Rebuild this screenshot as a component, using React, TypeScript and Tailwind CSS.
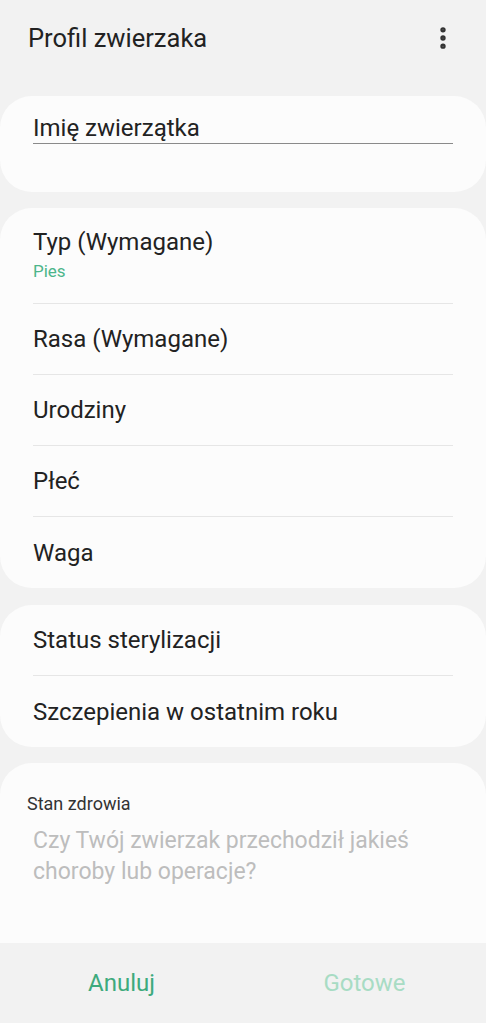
import { EllipsisVertical } from "lucide-react";

const font = { fontFamily: "Roboto, 'Noto Sans', sans-serif" };

function Row({ label, value, last }: { label: string; value?: string; last?: boolean }) {
	return (
		<div className="px-[33px]">
			<div
				className={
					"flex flex-col justify-center " +
					(value ? "h-[96px] " : "h-[71px] ") +
					(last ? "" : "border-b border-[#e6e6e6]")
				}
			>
				<span className="text-[24px] leading-[28px] text-[#222]">{label}</span>
				{value && <span className="mt-[3px] text-[17px] leading-[24px] text-[#4cb58a]">{value}</span>}
			</div>
		</div>
	);
}

export default function App() {
	return (
		<div className="h-[1023px] w-[486px] flex flex-col bg-[#f2f2f2] overflow-hidden" style={font}>
			<div className="flex-1 overflow-hidden flex flex-col">
				{/* Header */}
				<div className="h-[96px] shrink-0 flex items-start justify-between pl-[28px] pr-[29px] pt-[21px]">
					<h1 className="text-[25.5px] leading-[34px] text-[#222]">Profil zwierzaka</h1>
					<EllipsisVertical className="w-[28px] h-[28px] mt-[2.5px] text-[#333]" strokeWidth={2.6} />
				</div>

				{/* Name */}
				<div className="h-[96px] shrink-0 bg-[#fcfcfc] rounded-[32px] px-[33px] pt-[18px]">
					<div className="border-b border-[#8a8a8a] pb-[1px] text-[24px] leading-[28px] text-[#222]">
						Imię zwierzątka
					</div>
				</div>

				<div className="mt-[16px] shrink-0 bg-[#fcfcfc] rounded-[32px]">
					<Row label="Typ (Wymagane)" value="Pies" />
					<Row label="Rasa (Wymagane)" />
					<Row label="Urodziny" />
					<Row label="Płeć" />
					<Row label="Waga" last />
				</div>

				<div className="mt-[17px] shrink-0 bg-[#fcfcfc] rounded-[32px]">
					<Row label="Status sterylizacji" />
					<Row label="Szczepienia w ostatnim roku" last />
				</div>

				<div className="mt-[16px] shrink-0 h-[260px] bg-[#fcfcfc] rounded-[32px] pt-[29px]">
					<div className="pl-[27px] text-[18px] leading-[24px] text-[#333]">Stan zdrowia</div>
					<div className="pl-[33px] pr-[40px] mt-[9px] text-[23px] leading-[31px] text-[#bdbdbd]">
						Czy Twój zwierzak przechodził jakieś choroby lub operacje?
					</div>
				</div>
			</div>

			{/* Bottom bar */}
			<div className="h-[80px] shrink-0 grid grid-cols-2 items-center bg-[#f2f2f2]">
				<button className="text-center text-[24px] leading-[28px] text-[#3eaa7d]">Anuluj</button>
				<button className="text-center text-[24px] leading-[28px] text-[#a8dcc4]">Gotowe</button>
			</div>
		</div>
	);
}
